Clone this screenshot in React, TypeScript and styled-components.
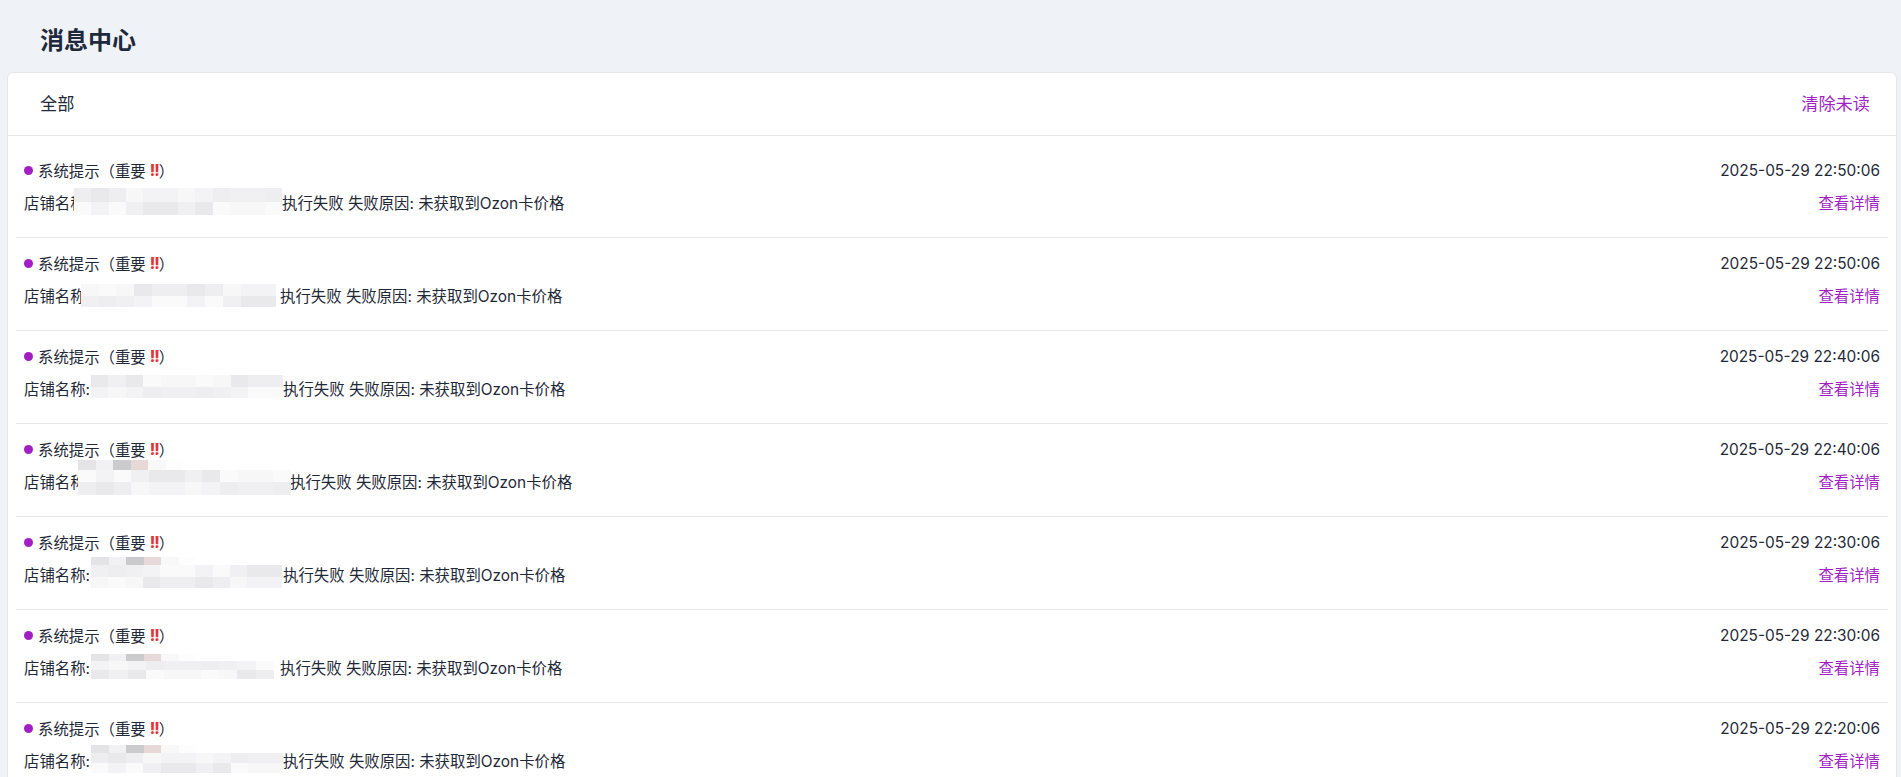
import React from "react";
import styled, { createGlobalStyle } from "styled-components";

interface IMask {
  left: number;
  right: number;
  top: number;
  bottom: number;
  accent?: boolean;
}

interface IMessage {
  id: number;
  time: string;
  label: string;
  nameWidth: number;
  mask: IMask;
}

const messages: IMessage[] = [
  { id: 1, time: "2025-05-29 22:50:06", label: "店铺名称:", nameWidth: 192, mask: { left: 50, right: 258, top: -14, bottom: -13 } },
  { id: 2, time: "2025-05-29 22:50:06", label: "店铺名称:", nameWidth: 190, mask: { left: 57, right: 252, top: -11, bottom: -12 } },
  { id: 3, time: "2025-05-29 22:40:06", label: "店铺名称:", nameWidth: 193, mask: { left: 67, right: 259, top: -13, bottom: -10 } },
  { id: 4, time: "2025-05-29 22:40:06", label: "店铺名称:", nameWidth: 200, mask: { left: 54, right: 267, top: -21, bottom: -14, accent: true } },
  { id: 5, time: "2025-05-29 22:30:06", label: "店铺名称:", nameWidth: 193, mask: { left: 67, right: 258, top: -17, bottom: -14, accent: true } },
  { id: 6, time: "2025-05-29 22:30:06", label: "店铺名称:", nameWidth: 190, mask: { left: 67, right: 250, top: -13, bottom: -12, accent: true } },
  { id: 7, time: "2025-05-29 22:20:06", label: "店铺名称:", nameWidth: 193, mask: { left: 67, right: 259, top: -15, bottom: -13, accent: true } },
];

const greys = ["#f3f3f5", "#eeeef1", "#f7f7f8", "#e9e9ec", "#fafafb", "#f0f0f2"];

// small seeded generator so the mosaic looks the same every run
const pick = (seed: number, i: number) => greys[(seed * 7 + i * 13 + ((i * i) % 5)) % greys.length];

const GlobalStyle = createGlobalStyle`
  html, body {
    margin: 0;
    padding: 0;
    overflow: hidden;
    background: #eff2f7;
  }
  body {
    font-family: Inter, "Noto Sans CJK SC", sans-serif;
    color: #1f2937;
  }
`;

const SPage = styled.div`
  height: 100vh;
  display: flex;
  flex-direction: column;
  padding: 0 4px 0 7px;
  box-sizing: border-box;
  overflow: hidden;
`;

const SPageTitle = styled.h1`
  margin: 0;
  height: 72px;
  padding: 5px 0 0 33px;
  box-sizing: border-box;
  display: flex;
  align-items: center;
  font-size: 24px;
  font-weight: 700;
  color: #1e293b;
`;

const SCard = styled.div`
  flex: 1;
  min-height: 0;
  display: flex;
  flex-direction: column;
  background: #fff;
  border: 1px solid #e5e7eb;
  border-bottom: none;
  border-radius: 6px 6px 0 0;
`;

const SCardHeader = styled.div`
  height: 63px;
  box-sizing: border-box;
  display: flex;
  align-items: center;
  justify-content: space-between;
  padding: 0 26px 4px 32px;
  border-bottom: 1px solid #e5e7eb;
  font-size: 17.2px;
`;

const STab = styled.span`
  color: #1f2937;
`;

const SClearBtn = styled.span`
  color: #a21fc4;
  cursor: pointer;
`;

const SList = styled.div`
  flex: 1;
  overflow: hidden;
  padding: 9px 8px 0;
`;

const SRow = styled.div`
  padding: 15px 8px 25px 8px;
  border-bottom: 1px solid #e5e7eb;
  display: flex;
  flex-direction: column;
  gap: 12px;
  font-size: 15.4px;
`;

const SLine = styled.div`
  height: 20px;
  display: flex;
  align-items: center;
  justify-content: space-between;
  white-space: nowrap;
`;

const STitle = styled.div`
  display: flex;
  align-items: center;
`;

const SDot = styled.span`
  width: 9px;
  height: 9px;
  border-radius: 50%;
  background: #a21fc4;
  margin-right: 5px;
`;

const SBang = styled.span`
  color: #e0353b;
  font-weight: 800;
  letter-spacing: -1px;
  margin-left: 4px;
`;

const SDetail = styled.div`
  position: relative;
  display: flex;
  align-items: center;
`;

const SNameSlot = styled.span<{ $width: number }>`
  display: inline-block;
  width: ${(p) => p.$width}px;
`;

const SMosaic = styled.div<{ $mask: IMask }>`
  position: absolute;
  left: ${(p) => p.$mask.left}px;
  width: ${(p) => p.$mask.right - p.$mask.left}px;
  top: calc(50% + ${(p) => p.$mask.top}px);
  bottom: calc(50% + ${(p) => p.$mask.bottom}px);
  display: flex;
  flex-direction: column;
`;

const SMosaicRow = styled.div<{ $h: number; $inset?: number }>`
  display: flex;
  flex: ${(p) => p.$h};
  margin-right: ${(p) => p.$inset || 0}px;
`;

const SCell = styled.span<{ $c: string }>`
  flex: 1;
  background: ${(p) => p.$c};
`;

const STime = styled.span`
  color: #1f2937;
`;

const SLink = styled.span`
  color: #a21fc4;
  cursor: pointer;
`;

const Mosaic: React.FC<{ mask: IMask; seed: number }> = ({ mask, seed }) => {
  const cols = Math.round((mask.right - mask.left) / 18);
  return (
    <SMosaic $mask={mask}>
      {mask.accent && (
        <SMosaicRow $h={9} $inset={Math.max(0, mask.right - mask.left - 105)}>
          {["#e4e4e7", "#f1f1f3", "#cbcbce", "#e8d9d9", "#f8f8f9", "#fdfdfd"].map((c, i) => (
            <SCell key={i} $c={c} />
          ))}
        </SMosaicRow>
      )}
      {[0, 1].map((r) => (
        <SMosaicRow key={r} $h={12}>
          {Array.from({ length: cols }).map((_, i) => (
            <SCell key={i} $c={pick(seed + r * 3, i)} />
          ))}
        </SMosaicRow>
      ))}
    </SMosaic>
  );
};

const MessageRow: React.FC<{ msg: IMessage }> = ({ msg }) => {
  return (
    <SRow>
      <SLine>
        <STitle>
          <SDot />
          系统提示（重要<SBang>!!</SBang>）
        </STitle>
        <STime>{msg.time}</STime>
      </SLine>
      <SLine>
        <SDetail>
          {msg.label}
          <SNameSlot $width={msg.nameWidth} />
          执行失败 失败原因: 未获取到Ozon卡价格
          <Mosaic mask={msg.mask} seed={msg.id} />
        </SDetail>
        <SLink>查看详情</SLink>
      </SLine>
    </SRow>
  );
};

const App: React.FC = () => {
  return (
    <>
      <GlobalStyle />
      <SPage>
        <SPageTitle>消息中心</SPageTitle>
        <SCard>
          <SCardHeader>
            <STab>全部</STab>
            <SClearBtn>清除未读</SClearBtn>
          </SCardHeader>
          <SList>
            {messages.map((m) => (
              <MessageRow key={m.id} msg={m} />
            ))}
          </SList>
        </SCard>
      </SPage>
    </>
  );
};

export default App;
